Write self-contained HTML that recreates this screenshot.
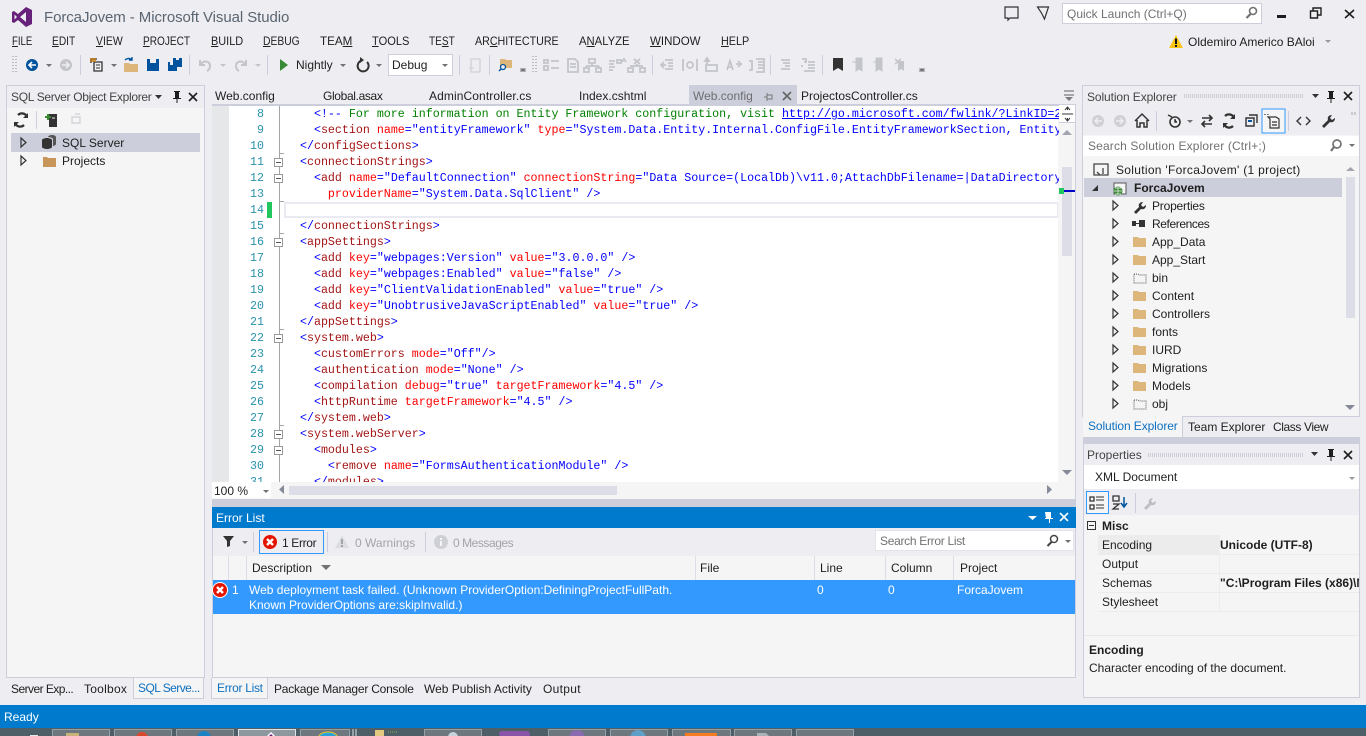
<!DOCTYPE html>
<html><head><meta charset="utf-8"><title>ForcaJovem - Microsoft Visual Studio</title>
<style>
*{box-sizing:border-box}
html,body{margin:0;padding:0;width:1366px;height:736px;overflow:hidden;background:#eeeef2}
body{position:relative;font-family:"Liberation Sans",sans-serif;font-size:12px;color:#1e1e1e}
.b{position:absolute}
.x{position:absolute;white-space:pre;line-height:16px;height:16px}
.x u{text-decoration:underline}
.m{transform-origin:0 50%}
.g{color:#a2a4a5}
.w{color:#fff}
.p{color:#0e70c0}
.bd{font-weight:bold}
#code{position:absolute;left:286px;top:107px;width:773px;height:375px;overflow:hidden;font-family:"Liberation Mono",monospace;font-size:11.65px;line-height:16px;color:#0000ff;white-space:pre}
#code div{height:16px}
#code i{font-style:normal;color:#a31515}
#code em{font-style:normal;color:#ff0000}
#code q{quotes:none;color:#008000}
#code a{color:#0000ff;text-decoration:underline}
#nums{position:absolute;left:229px;top:107px;width:35px;height:375px;overflow:hidden;text-align:right;font-family:"Liberation Mono",monospace;font-size:11.65px;line-height:16px;color:#2b91af}
svg{position:absolute;left:0;top:0}
</style></head><body>

<!-- left panel -->
<div class="b" style="left:6px;top:85px;width:199px;height:593px;background:#f5f5f5;border:1px solid #cccedb"></div>
<div class="b" style="left:7px;top:86px;width:197px;height:22px;background:#eeeef2"></div>
<div class="b" style="left:11px;top:133px;width:189px;height:19px;background:#cccedb"></div>
<div class="x" style="left:11px;top:89px;color:#444;letter-spacing:-.3px">SQL Server Object Explorer</div>
<div class="x" style="left:62px;top:135px">SQL Server</div>
<div class="x" style="left:62px;top:153px">Projects</div>

<!-- left bottom tabs -->
<div class="b" style="left:133px;top:678px;width:71px;height:21px;background:#f5f5f5;border:1px solid #cccedb;border-top:0"></div>
<div class="x" style="left:11px;top:681px;letter-spacing:-.55px">Server Exp...</div>
<div class="x" style="left:84px;top:681px;letter-spacing:.25px">Toolbox</div>
<div class="x p" style="left:138px;top:680px;letter-spacing:-.55px">SQL Serve...</div>

<!-- tabs -->
<div class="b" style="left:689px;top:85px;width:108px;height:20px;background:#cccedb"></div>
<div class="x" style="left:215px;top:88px">Web.config</div>
<div class="x" style="left:323px;top:88px;letter-spacing:-.35px">Global.asax</div>
<div class="x" style="left:429px;top:88px;letter-spacing:.1px">AdminController.cs</div>
<div class="x" style="left:579px;top:88px">Index.cshtml</div>
<div class="x" style="left:693px;top:88px;color:#6d6d70">Web.config</div>
<div class="x" style="left:801px;top:88px">ProjectosController.cs</div>

<!-- editor -->
<div class="b" style="left:212px;top:104px;width:864px;height:396px;background:#f5f5f5;border-top:2px solid #cccedb;border-right:1px solid #cccedb"></div>
<div class="b" style="left:212px;top:106px;width:17px;height:376px;background:#e6e7e8"></div>
<div class="b" style="left:229px;top:106px;width:829px;height:376px;background:#fff"></div>
<div class="b" style="left:279px;top:106px;width:1px;height:376px;background:#a5a5a5"></div>
<div class="b" style="left:267px;top:202px;width:5px;height:16px;background:#22c55e"></div>
<div class="b" style="left:284px;top:202px;width:774px;height:16px;border:2px solid #eaeaf2;border-right-width:1px"></div>
<div id="nums">8<br>9<br>10<br>11<br>12<br>13<br>14<br>15<br>16<br>17<br>18<br>19<br>20<br>21<br>22<br>23<br>24<br>25<br>26<br>27<br>28<br>29<br>30<br>31</div>
<div id="code"><div>    &lt;!-- <q>For more information on Entity Framework configuration, visit </q><a>http://go.microsoft.com/fwlink/?LinkID=237468</a> --&gt;</div><div>    &lt;<i>section</i> <em>name</em>="entityFramework" <em>type</em>="System.Data.Entity.Internal.ConfigFile.EntityFrameworkSection, EntityFramework"</div><div>  &lt;/<i>configSections</i>&gt;</div><div>  &lt;<i>connectionStrings</i>&gt;</div><div>    &lt;<i>add</i> <em>name</em>="DefaultConnection" <em>connectionString</em>="Data Source=(LocalDb)\v11.0;AttachDbFilename=|DataDirectory|\aspnet.mdf"</div><div>      <em>providerName</em>="System.Data.SqlClient" /&gt;</div><div> </div><div>  &lt;/<i>connectionStrings</i>&gt;</div><div>  &lt;<i>appSettings</i>&gt;</div><div>    &lt;<i>add</i> <em>key</em>="webpages:Version" <em>value</em>="3.0.0.0" /&gt;</div><div>    &lt;<i>add</i> <em>key</em>="webpages:Enabled" <em>value</em>="false" /&gt;</div><div>    &lt;<i>add</i> <em>key</em>="ClientValidationEnabled" <em>value</em>="true" /&gt;</div><div>    &lt;<i>add</i> <em>key</em>="UnobtrusiveJavaScriptEnabled" <em>value</em>="true" /&gt;</div><div>  &lt;/<i>appSettings</i>&gt;</div><div>  &lt;<i>system.web</i>&gt;</div><div>    &lt;<i>customErrors</i> <em>mode</em>="Off"/&gt;</div><div>    &lt;<i>authentication</i> <em>mode</em>="None" /&gt;</div><div>    &lt;<i>compilation</i> <em>debug</em>="true" <em>targetFramework</em>="4.5" /&gt;</div><div>    &lt;<i>httpRuntime</i> <em>targetFramework</em>="4.5" /&gt;</div><div>  &lt;/<i>system.web</i>&gt;</div><div>  &lt;<i>system.webServer</i>&gt;</div><div>    &lt;<i>modules</i>&gt;</div><div>      &lt;<i>remove</i> <em>name</em>="FormsAuthenticationModule" /&gt;</div><div>    &lt;/<i>modules</i>&gt;</div></div>
<div class="b" style="left:1062px;top:167px;width:10px;height:89px;background:#dcdde6"></div>
<div class="b" style="left:1059px;top:105px;width:16px;height:18px;background:#fff;border-bottom:1px solid #cccedb"></div>
<div class="b" style="left:1059px;top:188px;width:5px;height:6px;background:#22c55e"></div>
<div class="b" style="left:1064px;top:190px;width:11px;height:2px;background:#0000c8"></div>
<div class="b" style="left:212px;top:482px;width:59px;height:16px;background:#fff"></div>
<div class="b" style="left:289px;top:486px;width:328px;height:9px;background:#dcdde6"></div>
<div class="x" style="left:214px;top:483px;font-size:12px">100 %</div>
<div class="b" style="left:212px;top:499px;width:864px;height:8px;background:#cccedb"></div>

<!-- error list -->
<div class="b" style="left:212px;top:507px;width:864px;height:171px;background:#f5f5f5;border-right:1px solid #cccedb;border-bottom:1px solid #cccedb;border-left:1px solid #cccedb"></div>
<div class="b" style="left:212px;top:507px;width:864px;height:21px;background:#007acc"></div>
<div class="x w" style="left:216px;top:510px">Error List</div>
<div class="b" style="left:213px;top:528px;width:862px;height:28px;background:#eeeef2"></div>
<div class="b" style="left:259px;top:530px;width:65px;height:24px;border:1px solid #3399ff"></div>
<div class="x" style="left:282px;top:535px;letter-spacing:-.35px">1 Error</div>
<div class="x g" style="left:355px;top:535px">0 Warnings</div>
<div class="x g" style="left:453px;top:535px;letter-spacing:-.45px">0 Messages</div>
<div class="b" style="left:875px;top:530px;width:199px;height:21px;background:#fff;border:1px solid #e3e4ea"></div>
<div class="x" style="left:880px;top:533px;color:#717171;letter-spacing:-.3px">Search Error List</div>
<div class="b" style="left:213px;top:580px;width:862px;height:34px;background:#3399ff"></div>
<div class="x" style="left:252px;top:560px">Description</div>
<div class="x" style="left:700px;top:560px">File</div>
<div class="x" style="left:820px;top:560px">Line</div>
<div class="x" style="left:891px;top:560px">Column</div>
<div class="x" style="left:960px;top:560px">Project</div>
<div class="x w" style="left:232px;top:582px">1</div>
<div class="x w" style="left:249px;top:582px">Web deployment task failed. (Unknown ProviderOption:DefiningProjectFullPath.</div>
<div class="x w" style="left:249px;top:597px">Known ProviderOptions are:skipInvalid.)</div>
<div class="x w" style="left:817px;top:582px">0</div>
<div class="x w" style="left:888px;top:582px">0</div>
<div class="x w" style="left:957px;top:582px">ForcaJovem</div>

<!-- bottom tabs -->
<div class="b" style="left:211px;top:678px;width:57px;height:21px;background:#f5f5f5;border:1px solid #cccedb;border-top:0"></div>
<div class="x p" style="left:217px;top:680px;letter-spacing:-.3px">Error List</div>
<div class="x" style="left:274px;top:681px;letter-spacing:-.22px">Package Manager Console</div>
<div class="x" style="left:424px;top:681px">Web Publish Activity</div>
<div class="x" style="left:543px;top:681px;letter-spacing:.3px">Output</div>

<!-- solution explorer -->
<div class="b" style="left:1082px;top:85px;width:278px;height:332px;background:#f5f5f5;border:1px solid #cccedb"></div>
<div class="b" style="left:1083px;top:86px;width:276px;height:49px;background:#eeeef2"></div>
<div class="b" style="left:1083px;top:136px;width:276px;height:20px;background:#fff"></div>
<div class="b" style="left:1084px;top:178px;width:258px;height:19px;background:#cccedb"></div>
<div class="b" style="left:1346px;top:177px;width:9px;height:141px;background:#dcdde6"></div>
<div class="x" style="left:1087px;top:89px;color:#444;letter-spacing:-.1px">Solution Explorer</div>
<div class="x" style="left:1088px;top:138px;color:#717171;letter-spacing:.15px">Search Solution Explorer (Ctrl+;)</div>
<div class="x" style="left:1116px;top:162px;letter-spacing:.3px">Solution 'ForcaJovem' (1 project)</div>
<div class="x bd" style="left:1134px;top:180px">ForcaJovem</div>
<div class="x" style="left:1152px;top:198px;letter-spacing:-.2px">Properties</div>
<div class="x" style="left:1152px;top:216px;letter-spacing:-.4px">References</div>
<div class="x" style="left:1152px;top:234px">App_Data</div>
<div class="x" style="left:1152px;top:252px">App_Start</div>
<div class="x" style="left:1152px;top:270px">bin</div>
<div class="x" style="left:1152px;top:288px">Content</div>
<div class="x" style="left:1152px;top:306px">Controllers</div>
<div class="x" style="left:1152px;top:324px">fonts</div>
<div class="x" style="left:1152px;top:342px">IURD</div>
<div class="x" style="left:1152px;top:360px">Migrations</div>
<div class="x" style="left:1152px;top:378px">Models</div>
<div class="x" style="left:1152px;top:396px">obj</div>
<div class="b" style="left:1083px;top:416px;width:100px;height:21px;background:#f5f5f5;border-right:1px solid #cccedb"></div>
<div class="b" style="left:1183px;top:416px;width:177px;height:1px;background:#cccedb"></div>
<div class="x p" style="left:1088px;top:418px;letter-spacing:-.1px">Solution Explorer</div>
<div class="x" style="left:1188px;top:419px">Team Explorer</div>
<div class="x" style="left:1273px;top:419px;letter-spacing:-.4px">Class View</div>

<!-- properties -->
<div class="b" style="left:1083px;top:437px;width:277px;height:7px;background:#cccedb"></div>
<div class="b" style="left:1083px;top:444px;width:277px;height:254px;background:#f5f5f5;border:1px solid #cccedb;border-top:0"></div>
<div class="b" style="left:1084px;top:444px;width:275px;height:21px;background:#eeeef2"></div>
<div class="b" style="left:1084px;top:465px;width:275px;height:24px;background:#fff"></div>
<div class="b" style="left:1084px;top:489px;width:275px;height:26px;background:#eeeef2"></div>
<div class="b" style="left:1098px;top:535px;width:122px;height:19px;background:#ececec"></div>
<div class="b" style="left:1098px;top:554px;width:261px;height:1px;background:#ececec"></div>
<div class="b" style="left:1098px;top:573px;width:261px;height:1px;background:#ececec"></div>
<div class="b" style="left:1098px;top:592px;width:261px;height:1px;background:#ececec"></div>
<div class="b" style="left:1098px;top:611px;width:261px;height:1px;background:#ececec"></div>
<div class="b" style="left:1084px;top:635px;width:275px;height:1px;background:#e8e8ea"></div>
<div class="b" style="left:1219px;top:535px;width:1px;height:76px;background:#ececec"></div>
<div class="x" style="left:1087px;top:447px;color:#444">Properties</div>
<div class="x" style="left:1095px;top:469px">XML Document</div>
<div class="x bd" style="left:1102px;top:518px">Misc</div>
<div class="x" style="left:1102px;top:537px">Encoding</div>
<div class="x" style="left:1102px;top:556px">Output</div>
<div class="x" style="left:1102px;top:575px">Schemas</div>
<div class="x" style="left:1102px;top:594px">Stylesheet</div>
<div class="x bd" style="left:1220px;top:537px">Unicode (UTF-8)</div>
<div class="b" style="left:1220px;top:575px;width:139px;height:16px;overflow:hidden"><div class="x bd" style="left:0;top:0">"C:\Program Files (x86)\Microsoft</div></div>
<div class="x bd" style="left:1089px;top:642px">Encoding</div>
<div class="x" style="left:1089px;top:660px">Character encoding of the document.</div>

<!-- title + menu -->
<div class="x" style="left:44px;top:9px;height:18px;line-height:18px;font-size:15px;color:#5a6470;letter-spacing:-.08px">ForcaJovem - Microsoft Visual Studio</div>
<div class="x m" style="left:12px;top:33px;transform:scaleX(.8)"><u>F</u>ILE</div>
<div class="x m" style="left:52px;top:33px;transform:scaleX(.85)"><u>E</u>DIT</div>
<div class="x m" style="left:96px;top:33px;transform:scaleX(.87)"><u>V</u>IEW</div>
<div class="x m" style="left:143px;top:33px;transform:scaleX(.84)"><u>P</u>ROJECT</div>
<div class="x m" style="left:211px;top:33px;transform:scaleX(.91)"><u>B</u>UILD</div>
<div class="x m" style="left:263px;top:33px;transform:scaleX(.86)"><u>D</u>EBUG</div>
<div class="x m" style="left:320px;top:33px;transform:scaleX(.97)">TEA<u>M</u></div>
<div class="x m" style="left:372px;top:33px;transform:scaleX(.925)"><u>T</u>OOLS</div>
<div class="x m" style="left:429px;top:33px;transform:scaleX(.84)">TE<u>S</u>T</div>
<div class="x m" style="left:475px;top:33px;transform:scaleX(.89)">AR<u>C</u>HITECTURE</div>
<div class="x m" style="left:579px;top:33px;transform:scaleX(.94)">A<u>N</u>ALYZE</div>
<div class="x m" style="left:650px;top:33px;transform:scaleX(.96)"><u>W</u>INDOW</div>
<div class="x m" style="left:721px;top:33px;transform:scaleX(.9)"><u>H</u>ELP</div>
<div class="b" style="left:1062px;top:3px;width:200px;height:21px;background:#fff;border:1px solid #cccedb"></div>
<div class="x" style="left:1067px;top:6px;color:#717171">Quick Launch (Ctrl+Q)</div>
<div class="x" style="left:1188px;top:34px">Oldemiro Americo BAloi</div>
<div class="x" style="left:296px;top:57px">Nightly</div>
<div class="b" style="left:388px;top:54px;width:65px;height:22px;background:#fff;border:1px solid #cccedb"></div>
<div class="x" style="left:392px;top:57px">Debug</div>

<!-- status / taskbar -->
<div class="b" style="left:0;top:705px;width:1366px;height:23px;background:#007acc"></div>
<div class="x w" style="left:4px;top:709px">Ready</div>
<div class="b" style="left:0;top:728px;width:1366px;height:8px;background:#4f5f68"></div>
<div class="b" style="left:52px;top:729px;width:58px;height:7px;background:#6c787e;border:1px solid #94a0a6;border-bottom:0"></div>
<div class="b" style="left:114px;top:729px;width:58px;height:7px;background:#6c787e;border:1px solid #94a0a6;border-bottom:0"></div>
<div class="b" style="left:176px;top:729px;width:58px;height:7px;background:#6c787e;border:1px solid #94a0a6;border-bottom:0"></div>
<div class="b" style="left:238px;top:729px;width:58px;height:7px;background:#8d989e;border:1px solid #dfe3e5;border-bottom:0"></div>
<div class="b" style="left:300px;top:729px;width:50px;height:7px;background:#6c787e;border:1px solid #94a0a6;border-bottom:0"></div>
<div class="b" style="left:352px;top:729px;width:2px;height:7px;background:#94a0a6"></div>
<div class="b" style="left:355px;top:729px;width:2px;height:7px;background:#94a0a6"></div>
<div class="b" style="left:424px;top:729px;width:58px;height:7px;background:#6c787e;border:1px solid #94a0a6;border-bottom:0"></div>
<div class="b" style="left:548px;top:729px;width:58px;height:7px;background:#6c787e;border:1px solid #94a0a6;border-bottom:0"></div>
<div class="b" style="left:610px;top:729px;width:58px;height:7px;background:#6c787e;border:1px solid #94a0a6;border-bottom:0"></div>
<div class="b" style="left:672px;top:729px;width:59px;height:7px;background:#6c787e;border:1px solid #94a0a6;border-bottom:0"></div>
<div class="b" style="left:734px;top:729px;width:58px;height:7px;background:#6c787e;border:1px solid #94a0a6;border-bottom:0"></div>
<div class="b" style="left:796px;top:729px;width:58px;height:7px;background:#6c787e;border:1px solid #94a0a6;border-bottom:0"></div>

<svg width="1366" height="736" viewBox="0 0 1366 736">
<defs>
<g id="fo"><path d="M0 2h5l1 1h7v9H0z" fill="#dcb67a"/></g>
<g id="ex"><path d="M1 0l5 4.500L1 9z" fill="none" stroke="#333" stroke-width="1.200"/></g>
<g id="cl"><path d="M0 0l8 8M8 0l-8 8" stroke="currentColor" stroke-width="1.600" fill="none"/></g>
<g id="pin"><path d="M2 0h6v1H7v6h2v1H5.500v4h-1V8H1V7h2V1H2z" fill="currentColor"/></g>
<g id="err"><circle cx="0" cy="0" r="7" fill="#e51400"/><path d="M-3-3l6 6M3-3l-6 6" stroke="#fff" stroke-width="2.400"/></g>
</defs>

<!-- taskbar contents -->
<path d="M30 735h8v1h-8z" fill="#e8e8e8"/>
<rect x="66" y="733" width="13" height="3" fill="#c9b27a"/>
<circle cx="142" cy="738" r="6" fill="#d9482b"/>
<circle cx="204" cy="738" r="7" fill="#1b82c4"/>
<path d="M267 736l4-4 4 4z" fill="#fff"/><path d="M269 736l2-2 2 2z" fill="#68217a"/>
<ellipse cx="328" cy="737" rx="9" ry="5" fill="#2aa3d8" stroke="#f3c623"/>
<rect x="375" y="730" width="9" height="6" fill="#e3c97f"/><path d="M388 732h9" stroke="#7ab648" stroke-dasharray="1 1"/>
<circle cx="453" cy="737" r="5" fill="#c5d3da"/>
<rect x="499" y="731" width="31" height="6" rx="3" fill="#8a54a8"/>
<circle cx="577" cy="738" r="8" fill="#8a6bb0"/>
<circle cx="638" cy="738" r="8" fill="#5d9fc6"/>
<rect x="685" y="733" width="32" height="3" fill="#f57c1f"/>
<path d="M757 733h9l3 3h-12z" fill="#a8b2b7"/>

<!-- VS logo -->
<path fill="#68217a" fill-rule="evenodd" d="M26 7L18 14 14 11 12 12V22L14 23 18 20 26 27 32 24V10ZM26 12V22L20 17ZM14.500 14.500L17 17 14.500 19.500Z"/>

<!-- top right -->
<path d="M1005 7h13v11h-8l-2 2v-2h-3z" fill="none" stroke="#333" stroke-width="1.200"/>
<path d="M1037.500 7h11l-4 12-3-6z" fill="none" stroke="#333" stroke-width="1.200"/>
<circle cx="1253" cy="11" r="3.500" fill="none" stroke="#717171" stroke-width="1.600"/><path d="M1250.500 14l-4 4" stroke="#717171" stroke-width="2.200"/>
<rect x="1277" y="15" width="9" height="3" fill="#1e1e1e"/>
<path d="M1313 11V8h8v7h-3M1310.500 11h7v7h-7z" fill="none" stroke="#1e1e1e" stroke-width="1.400"/>
<path d="M1345 10l9 8M1354 10l-9 8" stroke="#1e1e1e" stroke-width="1.600"/>
<path d="M1176 35l7 13h-14z" fill="#fcc419"/><rect x="1175" y="38.500" width="2" height="5.500" fill="#111"/><rect x="1175" y="45" width="2" height="2" fill="#111"/>
<path d="M1325 40h6l-3 3z" fill="#999"/>

<!-- toolbar -->
<path d="M13 56v18M16 56v18" stroke="#a9abb5" stroke-width="1.500" stroke-dasharray="1 2"/>
<circle cx="32" cy="65" r="6" fill="#00539c"/><path d="M36 65h-6M32 62l-3 3 3 3" stroke="#fff" stroke-width="1.600" fill="none"/>
<path d="M46 64h6l-3 3z" fill="#717171"/>
<circle cx="66" cy="65" r="6" fill="#c4c5c9"/><path d="M62 65h6M66 62l3 3-3 3" stroke="#eeeef2" stroke-width="1.600" fill="none"/>
<rect x="80" y="55" width="1" height="20" fill="#cccedb"/>
<path d="M94 62h8v9h-8zM91 63v-4h6" fill="none" stroke="#333" stroke-width="1.300"/><rect x="90" y="58" width="6" height="4" fill="#c27d1a" opacity=".8"/><path d="M96 65h4M96 68h4" stroke="#333"/>
<path d="M111 64h6l-3 3z" fill="#717171"/>
<path d="M124 63h5l1 1h8v8h-14z" fill="#dcb67a"/><path d="M125 60c2-2 5-2 7 0M132 57v3h-3" stroke="#00539c" stroke-width="1.400" fill="none"/>
<path d="M147 59h12v12h-12z" fill="#00539c"/><rect x="150" y="59" width="6" height="4" fill="#eeeef2"/>
<path d="M168 62h9v9h-9z" fill="#00539c"/><path d="M173 58h9v9h-5v-5h-4z" fill="#00539c"/><rect x="170" y="62" width="3" height="3" fill="#eeeef2"/><rect x="176" y="58" width="3" height="2" fill="#eeeef2"/>
<rect x="189" y="55" width="1" height="20" fill="#cccedb"/>
<path d="M200 60v5h5M201 64c3-4 9-3 9 2 0 2-1 4-3 5" fill="none" stroke="#c4c5c9" stroke-width="2"/>
<path d="M220 64h6l-3 3z" fill="#c4c5c9"/>
<path d="M246 60v5h-5M245 64c-3-4-9-3-9 2 0 2 1 4 3 5" fill="none" stroke="#c4c5c9" stroke-width="2"/>
<path d="M255 64h6l-3 3z" fill="#c4c5c9"/>
<rect x="267" y="55" width="1" height="20" fill="#cccedb"/>
<path d="M280 59l8 6-8 6z" fill="#388a34"/>
<path d="M340 64h6l-3 3z" fill="#717171"/>
<path d="M367 62a5.500 5.500 0 1 1-5-1.500" fill="none" stroke="#333" stroke-width="2"/><path d="M360 57l4 3-4 3z" fill="#333"/>
<path d="M376 64h6l-3 3z" fill="#717171"/>
<path d="M442 64h6l-3 3z" fill="#717171"/>
<rect x="459" y="55" width="1" height="20" fill="#cccedb"/>
<path d="M471 59h9v13h-9zM469 68h5" fill="none" stroke="#d0d1d6" stroke-width="1.300"/>
<rect x="489" y="55" width="1" height="20" fill="#cccedb"/>
<path d="M500 59h5l1 1h6v8h-12z" fill="#dcb67a"/><circle cx="503" cy="67" r="2.500" fill="#eeeef2" stroke="#00539c" stroke-width="1.300"/><path d="M501 69l-2 2" stroke="#00539c" stroke-width="1.500"/>
<path d="M520 71h6M521 69h4l-2 2z" fill="#717171" stroke="#717171"/>
<path d="M533 56v18M536 56v18" stroke="#a9abb5" stroke-width="1.500" stroke-dasharray="1 2"/>
<g fill="none" stroke="#c4c5cb" stroke-width="1.800">
<path d="M544 60h4v3h-4zM551 61h8M544 66h4v4h-4zM551 68h8"/>
<path d="M568 59h7l3 3v10h-10zM570 64h6M570 67h6"/>
<path d="M589 59h6v4h-6zM592 63v3M586 66h13M586 66v2M599 66v2M584 68h5v4h-5zM596 68h5v4h-5z"/>
<path d="M609 61h6M609 64h5M609 67h6M609 70h4M617 60h4v3h-4zM622 62l2-3 2 3"/>
<path d="M634 59l6 5M640 59l-6 5M637 64v2M630 66h13M628 68h5v4h-5zM640 68h5v4h-5z"/>
</g>
<rect x="652" y="55" width="1" height="20" fill="#cccedb"/>
<g fill="none" stroke="#c4c5cb" stroke-width="1.800">
<path d="M665 60h8M668 63h5M668 66h5M665 69h8M666 65h-5M664 62l-3 3 3 3"/>
<path d="M684 60h-1v10h1M696 60h1v10h-1"/><circle cx="690" cy="65" r="3"/>
<path d="M707 58l-2 3h4zM707 60v4M706 65h11v6h-11z"/>
<path d="M727 70l3-9 3 9M728 67h4M736 64h4M738 61l3 3-3 3"/>
<path d="M749 61h3v9h-3M756 59h8v13h-8M758 62h5M758 65h5M758 68h5"/>
</g>
<rect x="770" y="55" width="1" height="20" fill="#cccedb"/>
<g fill="none" stroke="#c4c5cb" stroke-width="1.800">
<path d="M781 60h9M783 63h7M785 66h5M781 69h9"/>
<path d="M802 59h4v3h-2M801 66h2M808 62h7M808 65h7M808 68h7M804 71h11"/>
</g>
<rect x="822" y="55" width="1" height="20" fill="#cccedb"/>
<path d="M833 58h10v13l-5-3-5 3z" fill="#333"/>
<path d="M856 58h6v13l-3-2-3 2zM856 62l-4 0" fill="#c4c5cb" stroke="#c4c5cb"/>
<path d="M876 58h6v13l-3-2-3 2zM873 62l3 0" fill="#c4c5cb" stroke="#c4c5cb"/>
<path d="M898 61h6v10l-3-2-3 2z" fill="#c4c5cb"/><path d="M895 59l6 5M901 59l-6 5" stroke="#c4c5cb" stroke-width="1.500"/>
<path d="M919 71h6M920 69h4l-2 2z" fill="#717171" stroke="#717171"/>

<!-- left panel title icons -->
<path d="M155 95h7l-3.500 4z" fill="#333"/>
<use href="#pin" x="172" y="91" style="color:#1e1e1e"/>
<use href="#cl" x="189" y="93" style="color:#1e1e1e"/>
<path d="M27 117a5.500 5.500 0 0 0-9-2M15 123a5.500 5.500 0 0 0 9 2" fill="none" stroke="#333" stroke-width="2.300"/><path d="M28 113v5h-5M14 127v-5h5" fill="#333"/>
<rect x="36" y="111" width="1" height="18" fill="#cccedb"/>
<path d="M49 114h8v13h-8z" fill="#333"/><path d="M45 117h6M48 114v6" stroke="#388a34" stroke-width="2"/><path d="M52 118h3" stroke="#eee"/>
<path d="M72 117h8v6h-8zM75 114h5" fill="none" stroke="#d0d1d6" stroke-width="1.300"/>
<use href="#ex" x="20" y="138"/>
<use href="#ex" x="20" y="156"/>
<path d="M42 140c0-1 3-2 5-2s5 1 5 2v7c0 1-3 2-5 2s-5-1-5-2z" fill="#333"/><path d="M48 137c0-1 2-2 4-2s4 1 4 2v7c0 1-2 2-3 2v-7c0-1-3-2-5-2z" fill="#555"/>
<path d="M43 157h4l1 1h8v9H43z" fill="#c8955a"/>

<!-- tab icons -->
<path d="M767 93v8M764 97h3M767 95h5v4h-5" fill="none" stroke="#777" stroke-width="1"/>
<use href="#cl" x="783" y="92" style="color:#666"/>
<path d="M1064 91h10M1064 95h10" stroke="#7a7a80" stroke-width="1.200"/><path d="M1065 97h8l-4 4z" fill="#7a7a80"/>

<!-- editor glyphs -->
<g fill="#fff" stroke="#999">
<rect x="274.500" y="158.500" width="8" height="8"/><rect x="274.500" y="174.500" width="8" height="8"/><rect x="274.500" y="238.500" width="8" height="8"/><rect x="274.500" y="334.500" width="8" height="8"/><rect x="274.500" y="430.500" width="8" height="8"/><rect x="274.500" y="446.500" width="8" height="8"/>
</g>
<path d="M276 162.500h5M276 178.500h5M276 242.500h5M276 338.500h5M276 434.500h5M276 450.500h5" stroke="#555"/>
<path d="M279 153.500h5M279 201.500h5M279 233.500h5M279 329.500h5M279 425.500h5" stroke="#a5a5a5"/>
<path d="M1062 114h11M1067.500 107v3M1067.500 118v3M1065 110l2.500-3 2.500 3M1065 118l2.500 3 2.500-3" stroke="#333" fill="none"/>
<path d="M1062 135l5-5 5 5z" fill="#a2a4b0"/>
<path d="M1062 470h10l-5 5z" fill="#868999"/>
<path d="M1047 485v9l5-4.500z" fill="#868999"/>
<path d="M284 485v9l-5-4.500z" fill="#868999"/>
<path d="M263 490h6l-3 3z" fill="#717171"/>

<!-- error list glyphs -->
<path d="M1028 516h9l-4.500 4z" fill="#fff"/>
<path d="M1045 512h6v6h2v1h-3v4h-1v-4h-4v-1h1z" fill="#fff"/>
<use href="#cl" x="1060" y="513" style="color:#fff"/>
<rect x="253" y="532" width="1" height="20" fill="#cccedb"/>
<rect x="327" y="532" width="1" height="20" fill="#cccedb"/>
<rect x="425" y="532" width="1" height="20" fill="#cccedb"/>
<path d="M223 536h11l-4 5v5l-3 1v-6z" fill="#333"/>
<path d="M242 541h6l-3 3z" fill="#717171"/>
<use href="#err" x="270" y="542"/>
<path d="M342 535l7 13h-14z" fill="#dcdde2"/><rect x="341" y="539" width="2" height="5" fill="#a2a4a5"/><rect x="341" y="545" width="2" height="2" fill="#a2a4a5"/>
<circle cx="441" cy="542" r="7" fill="#cfd0d5"/><rect x="440" y="541" width="2" height="5" fill="#f5f5f5"/><rect x="440" y="538" width="2" height="2" fill="#f5f5f5"/>
<circle cx="1054" cy="539" r="3.500" fill="none" stroke="#444" stroke-width="1.500"/><path d="M1051.500 542l-4 4" stroke="#444" stroke-width="2"/>
<path d="M1065 540h6l-3 3z" fill="#717171"/>
<path d="M321 565h10l-5 5z" fill="#717171"/>
<path d="M228.500 556v24M246.500 556v24M695.500 556v24M814.500 556v24M885.500 556v24M953.500 556v24" stroke="#dcdde6"/>
<circle cx="220" cy="590" r="8" fill="#fff"/><use href="#err" x="220" y="590"/>

<!-- solution explorer glyphs -->
<path d="M1312 94h7l-3.500 4z" fill="#333"/>
<use href="#pin" x="1326" y="91" style="color:#1e1e1e"/>
<use href="#cl" x="1344" y="92" style="color:#1e1e1e"/>
<path d="M1184 96h119" stroke="#b8bac6" stroke-width="4" stroke-dasharray="1 1" opacity=".6"/>
<circle cx="1098" cy="121" r="6" fill="#cfd0d5"/><path d="M1102 121h-6M1098 118l-3 3 3 3" stroke="#eeeef2" stroke-width="1.500" fill="none"/>
<circle cx="1120" cy="121" r="6" fill="#cfd0d5"/><path d="M1116 121h6M1120 118l3 3-3 3" stroke="#eeeef2" stroke-width="1.500" fill="none"/>
<path d="M1135 121l7-7 7 7M1137 120v7h3v-4h4v4h3v-7" fill="none" stroke="#333" stroke-width="1.500"/>
<rect x="1156" y="111" width="1" height="20" fill="#cccedb"/>
<circle cx="1175" cy="122" r="5" fill="none" stroke="#333" stroke-width="1.600"/><path d="M1175 119v3h2M1168 115l4 2" stroke="#333" stroke-width="1.400"/>
<path d="M1187 120h6l-3 3z" fill="#717171"/>
<path d="M1202 118h10M1209 115l3 3-3 3M1212 124h-10M1205 121l-3 3 3 3" stroke="#333" stroke-width="1.600" fill="none"/>
<path d="M1234 118a5.500 5.500 0 0 0-9-2M1224 124a5.500 5.500 0 0 0 9 2" fill="none" stroke="#333" stroke-width="2.300"/><path d="M1235 114v5h-5M1223 128v-5h5" fill="#333"/>
<path d="M1246 118h8v8h-8zM1249 115h8v8" fill="none" stroke="#333" stroke-width="1.400"/><rect x="1248" y="120" width="4" height="2" fill="#00539c"/>
<rect x="1262" y="109" width="23" height="24" fill="#f5f5f5" stroke="#3399ff"/>
<path d="M1268 117h8l3 2v9h-9v-9zM1272 122h5M1272 125h5M1265 114v1M1268 114v1" fill="none" stroke="#333" stroke-width="1.200"/>
<rect x="1288" y="111" width="1" height="20" fill="#cccedb"/>
<path d="M1301 117l-4 4 4 4M1306 117l4 4-4 4" fill="none" stroke="#333" stroke-width="1.400"/>
<path d="M1322 126l6-6c-1-3 1-5 4-5l-2 3 2 2 3-2c0 3-2 5-5 4l-6 6z" fill="#333"/>
<path d="M1352 112v3M1355 112v3" stroke="#a2a4b0"/>
<circle cx="1337" cy="144" r="4" fill="none" stroke="#717171" stroke-width="1.700"/><path d="M1334 147l-3 4" stroke="#717171" stroke-width="2.200"/>
<path d="M1349 144h6l-3 3z" fill="#717171"/>
<path d="M1094 164h14v11h-14z" fill="none" stroke="#444" stroke-width="1.300"/><path d="M1097 172l3 3M1103 168v6" stroke="#444" stroke-width="1.300"/>
<path d="M1346 171l4.500-4 4.500 4z" fill="#a2a4b0"/>
<path d="M1345 405l5 5 5-5z" fill="#868999"/>
<path d="M1094 188v6h-6z" fill="#333" transform="translate(4 -3)"/>
<rect x="1114" y="183" width="12" height="11" fill="#f5f5f5" stroke="#555"/><circle cx="1118" cy="191" r="4.500" fill="#388a34"/><path d="M1114 191h8M1118 187v8M1115 188h6M1115 194h6" stroke="#f0f0f0" stroke-width=".7"/>
<use href="#ex" x="1112" y="201"/><use href="#ex" x="1112" y="219"/><use href="#ex" x="1112" y="237"/><use href="#ex" x="1112" y="255"/><use href="#ex" x="1112" y="273"/><use href="#ex" x="1112" y="291"/><use href="#ex" x="1112" y="309"/><use href="#ex" x="1112" y="327"/><use href="#ex" x="1112" y="345"/><use href="#ex" x="1112" y="363"/><use href="#ex" x="1112" y="381"/><use href="#ex" x="1112" y="399"/>
<path d="M1134 212l5-5c-1-3 1-5 4-5l-2 3 2 2 3-2c0 3-2 5-5 4l-5 5z" fill="#333"/>
<path d="M1132 221h4v5h-4zM1139 220h6v7h-6z" fill="#333"/><path d="M1136 223.500h3" stroke="#333"/>
<use href="#fo" x="1133" y="235"/><use href="#fo" x="1133" y="253"/><use href="#fo" x="1133" y="289"/><use href="#fo" x="1133" y="307"/><use href="#fo" x="1133" y="325"/><use href="#fo" x="1133" y="343"/><use href="#fo" x="1133" y="361"/><use href="#fo" x="1133" y="379"/>
<path d="M1134 274h4l1 1h7v8h-12z" fill="none" stroke="#555" stroke-dasharray="1 1"/>
<path d="M1134 400h4l1 1h7v8h-12z" fill="none" stroke="#555" stroke-dasharray="1 1"/>

<!-- properties glyphs -->
<path d="M1148 455h155" stroke="#b8bac6" stroke-width="4" stroke-dasharray="1 1" opacity=".6"/>
<path d="M1311 452h7l-3.500 4z" fill="#333"/>
<use href="#pin" x="1326" y="449" style="color:#1e1e1e"/>
<use href="#cl" x="1344" y="451" style="color:#1e1e1e"/>
<path d="M1349 477h6l-3 3z" fill="#999"/>
<rect x="1086.500" y="491.500" width="22" height="22" fill="#f5f5f5" stroke="#3399ff"/>
<path d="M1090 497h4v4h-4zM1090 505h4v4h-4z" fill="none" stroke="#333" stroke-width="1.300"/><path d="M1096 497h8M1096 500h8M1096 505h8M1096 508h8" stroke="#333"/>
<path d="M1113 496h6v5h-6zM1113 504h6l-6 5h6" fill="none" stroke="#333" stroke-width="1.300"/><path d="M1124 497v9M1121 503l3 4 3-4" stroke="#00539c" stroke-width="1.500" fill="none"/>
<rect x="1135" y="493" width="1" height="20" fill="#cccedb"/>
<path d="M1144 508l5-5c-1-3 1-5 4-5l-2 3 2 2 3-2c0 3-2 5-5 4l-5 5z" fill="#bdbec4"/>
<rect x="1087.500" y="521.500" width="8" height="8" fill="none" stroke="#333"/><path d="M1089 525.500h5" stroke="#333"/>
</svg>
</body></html>
